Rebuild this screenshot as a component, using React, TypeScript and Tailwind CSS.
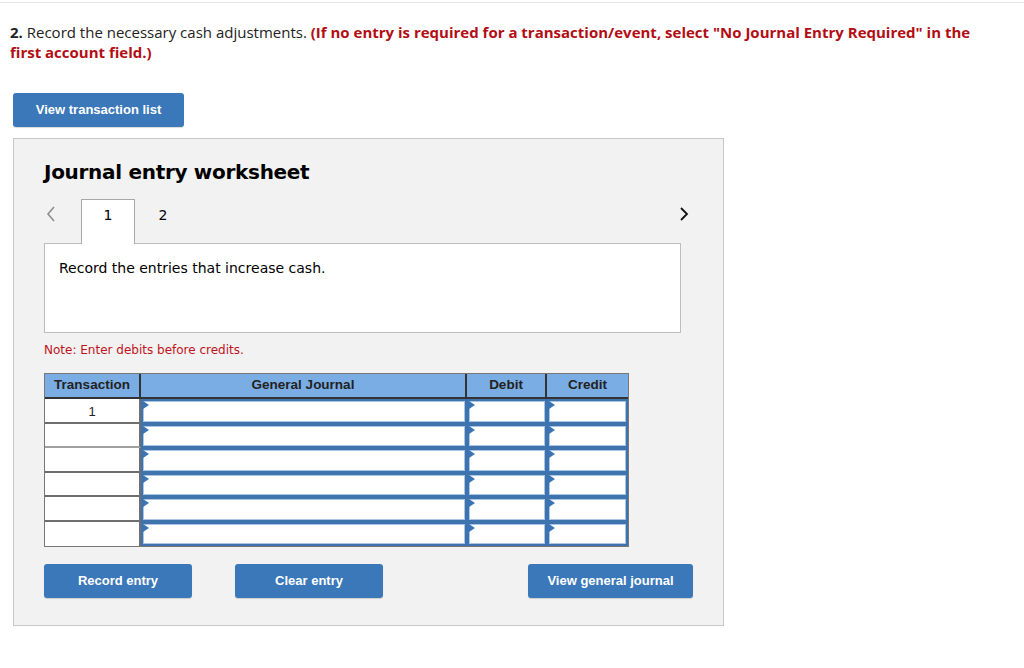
import React from 'react';

const rows = [1, 2, 3, 4, 5, 6];

const Flag = () => (
  <svg className="absolute left-0 top-0" width="6" height="8" viewBox="0 0 6 8">
    <path d="M0 0 L6 4 L0 8 Z" fill="#3a74b4" />
  </svg>
);

const InputCell = () => (
  <div className="relative h-[24.5px] border-2 border-[#3f73ad] bg-white">
    <div className="absolute inset-0 border border-[#a9c6e6]" />
    <Flag />
  </div>
);

const Btn: React.FC<{ label: string; className?: string }> = ({ label, className }) => (
  <button
    className={`h-[34px] rounded-[3px] bg-[#3b78b9] text-[13px] font-bold text-white shadow-[0_1px_1px_rgba(0,0,0,0.15)] ${className ?? ''}`}
    style={{ fontFamily: '"Liberation Sans", Arial, sans-serif' }}
  >
    {label}
  </button>
);

export default function App() {
  return (
    <div className="min-h-[668px] bg-white text-black">
      <div className="pt-[2px]">
        <div className="h-px w-full bg-[#e6e6e6]" />
      </div>
      <p
        className="w-[1000px] px-[10px] pt-[19px] text-[15px] leading-[20px] text-[#222]"
        style={{ fontFamily: '"Open Sans", Lato, sans-serif' }}
      >
        <span className="font-bold">2.</span> Record the necessary cash adjustments.{' '}
        <span className="font-bold text-[#b30d14]">
          (If no entry is required for a transaction/event, select "No Journal Entry Required" in the first account field.)
        </span>
      </p>

      <div className="pl-[13px] pt-[31px]">
        <Btn label="View transaction list" className="w-[171px]" />
      </div>

      <div className="ml-[13px] mt-[11px] h-[488px] w-[711px] border border-[#c8c8c8] bg-[#f2f2f2] pl-[30px] pt-[20px]">
        <h2
          className="text-[20px] font-bold leading-[26px] tracking-[-0.3px]"
          style={{ fontFamily: '"DejaVu Sans", Verdana, sans-serif' }}
        >
          Journal entry worksheet
        </h2>

        <div className="mt-[14px] w-[637px]" style={{ fontFamily: '"DejaVu Sans", Verdana, sans-serif' }}>
          <div className="flex h-[44px] items-stretch">
            <div className="flex w-[37px] items-start pl-[2px] pt-[7px]">
              <svg width="10" height="16" viewBox="0 0 10 16">
                <path d="M8 1 L2 8 L8 15" stroke="#8e8e8e" strokeWidth="1.6" fill="none" />
              </svg>
            </div>
            <div className="relative z-10 -mb-px flex w-[54px] items-start justify-center border border-b-0 border-[#a8a8a8] bg-white pt-[5px] text-[14px]">
              1
            </div>
            <div className="flex w-[56px] items-start justify-center pt-[6px] text-[14px]">2</div>
            <div className="flex-1" />
            <div className="-mr-[8px] flex items-start pt-[7px]">
              <svg width="10" height="16" viewBox="0 0 10 16">
                <path d="M2 2 L8 8 L2 14" stroke="#111" strokeWidth="1.8" fill="none" />
              </svg>
            </div>
          </div>
          <div className="h-[90px] border border-[#bdbdbd] bg-white px-[14px] pt-[14px] text-[14px]">
            Record the entries that increase cash.
          </div>
          <p className="mt-[8px] text-[12px] text-[#c1121b]">Note: Enter debits before credits.</p>
        </div>

        <div
          className="mt-[14px] w-[585px] border border-[#777] bg-white"
          style={{ fontFamily: '"Liberation Sans", Arial, sans-serif' }}
        >
          <div className="grid h-[25px] grid-cols-[96px_326px_80px_81px] border-b-2 border-[#333] bg-[#7aade3] text-[13.5px] font-bold text-[#222]">
            <div className="flex items-center justify-center border-r-2 border-[#333]">Transaction</div>
            <div className="flex items-center justify-center border-r-2 border-[#333]">General Journal</div>
            <div className="flex items-center justify-center border-r-2 border-[#333]">Debit</div>
            <div className="flex items-center justify-center">Credit</div>
          </div>
          {rows.map((r, i) => (
            <div key={r} className="grid grid-cols-[96px_326px_80px_81px]">
              <div
                className={`flex h-[24.5px] items-start justify-center border-r-2 border-[#6f6f6f] pt-[3px] text-[13px] text-[#222] ${
                  i < rows.length - 1 ? 'border-b-2' : ''
                } ${i === 1 ? 'border-b-[#a0a0a0]' : ''}`}
              >
                {i === 0 ? '1' : ''}
              </div>
              <InputCell />
              <InputCell />
              <InputCell />
            </div>
          ))}
        </div>

        <div className="mt-[17px] flex w-[649px]">
          <Btn label="Record entry" className="w-[148px]" />
          <Btn label="Clear entry" className="ml-[43px] w-[148px]" />
          <div className="flex-1" />
          <Btn label="View general journal" className="w-[165px]" />
        </div>
      </div>
    </div>
  );
}
